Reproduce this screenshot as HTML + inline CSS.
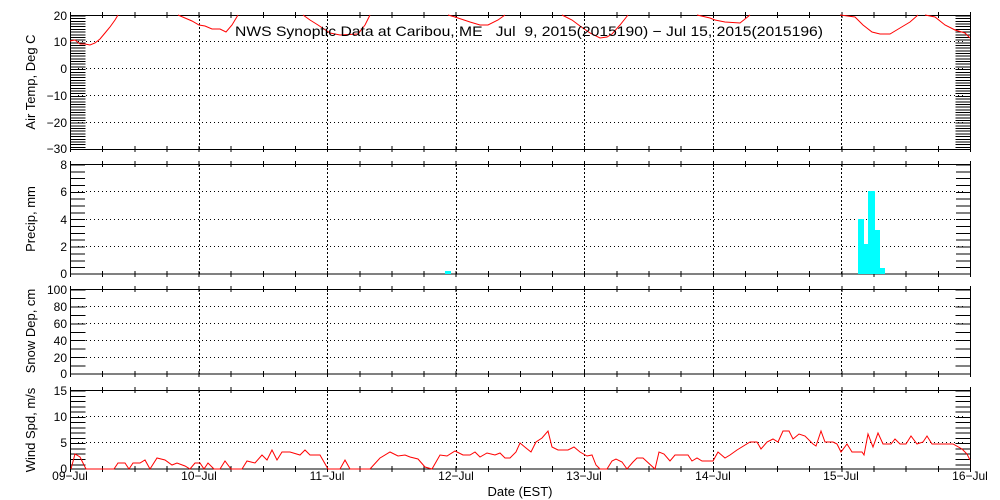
<!DOCTYPE html>
<html><head><meta charset="utf-8"><style>
html,body{margin:0;padding:0;background:#fff;}
svg{display:block;font-family:"Liberation Sans",sans-serif;}
</style></head><body>
<svg width="1000" height="500" viewBox="0 0 1000 500" xmlns="http://www.w3.org/2000/svg">
<rect width="1000" height="500" fill="#fff"/>
<g fill="none" stroke="#000" shape-rendering="crispEdges">
<rect x="70.5" y="15.5" width="900" height="134"/>
<rect x="70.5" y="164.5" width="900" height="109.5"/>
<rect x="70.5" y="289.5" width="900" height="84.5"/>
<rect x="70.5" y="390.5" width="900" height="78.5"/>
<line x1="78" y1="15.5" x2="78" y2="149.5" stroke-width="15" stroke-dasharray="1 1.68"/>
<line x1="963" y1="15.5" x2="963" y2="149.5" stroke-width="15" stroke-dasharray="1 1.68"/>
<line x1="78" y1="164.5" x2="78" y2="274" stroke-width="14" stroke-dasharray="1 5.84"/>
<line x1="963" y1="164.5" x2="963" y2="274" stroke-width="14" stroke-dasharray="1 5.84"/>
<line x1="78" y1="289.5" x2="78" y2="374" stroke-width="15" stroke-dasharray="1 7.45"/>
<line x1="963" y1="289.5" x2="963" y2="374" stroke-width="15" stroke-dasharray="1 7.45"/>
<line x1="78" y1="390.5" x2="78" y2="469" stroke-width="15" stroke-dasharray="1 4.27"/>
<line x1="963" y1="390.5" x2="963" y2="469" stroke-width="15" stroke-dasharray="1 4.27"/>
<g stroke-width="6" stroke-dasharray="1 31.14">
<line x1="70" y1="15" x2="971" y2="15"/><line x1="70" y1="149" x2="971" y2="149"/>
<line x1="70" y1="164" x2="971" y2="164"/><line x1="70" y1="274" x2="971" y2="274"/>
<line x1="70" y1="289" x2="971" y2="289"/><line x1="70" y1="374" x2="971" y2="374"/>
<line x1="70" y1="390" x2="971" y2="390"/><line x1="70" y1="469" x2="971" y2="469"/>
</g>
<g stroke-dasharray="1 3">
<line x1="78" y1="41.5" x2="963" y2="41.5"/><line x1="78" y1="68.5" x2="963" y2="68.5"/>
<line x1="78" y1="95.5" x2="963" y2="95.5"/><line x1="78" y1="122.5" x2="963" y2="122.5"/>
<line x1="78" y1="191.5" x2="963" y2="191.5"/><line x1="78" y1="219.5" x2="963" y2="219.5"/>
<line x1="78" y1="246.5" x2="963" y2="246.5"/>
<line x1="78" y1="306.5" x2="963" y2="306.5"/><line x1="78" y1="323.5" x2="963" y2="323.5"/>
<line x1="78" y1="340.5" x2="963" y2="340.5"/><line x1="78" y1="357.5" x2="963" y2="357.5"/>
<line x1="78" y1="416.5" x2="963" y2="416.5"/><line x1="78" y1="442.5" x2="963" y2="442.5"/>
</g>
<g stroke-dasharray="2 2">
<line x1="199.5" y1="15" x2="199.5" y2="149"/><line x1="327.5" y1="15" x2="327.5" y2="149"/><line x1="456.5" y1="15" x2="456.5" y2="149"/><line x1="584.5" y1="15" x2="584.5" y2="149"/><line x1="713.5" y1="15" x2="713.5" y2="149"/><line x1="841.5" y1="15" x2="841.5" y2="149"/>
<line x1="199.5" y1="164" x2="199.5" y2="274"/><line x1="327.5" y1="164" x2="327.5" y2="274"/><line x1="456.5" y1="164" x2="456.5" y2="274"/><line x1="584.5" y1="164" x2="584.5" y2="274"/><line x1="713.5" y1="164" x2="713.5" y2="274"/><line x1="841.5" y1="164" x2="841.5" y2="274"/>
<line x1="199.5" y1="289" x2="199.5" y2="374"/><line x1="327.5" y1="289" x2="327.5" y2="374"/><line x1="456.5" y1="289" x2="456.5" y2="374"/><line x1="584.5" y1="289" x2="584.5" y2="374"/><line x1="713.5" y1="289" x2="713.5" y2="374"/><line x1="841.5" y1="289" x2="841.5" y2="374"/>
<line x1="199.5" y1="390" x2="199.5" y2="469"/><line x1="327.5" y1="390" x2="327.5" y2="469"/><line x1="456.5" y1="390" x2="456.5" y2="469"/><line x1="584.5" y1="390" x2="584.5" y2="469"/><line x1="713.5" y1="390" x2="713.5" y2="469"/><line x1="841.5" y1="390" x2="841.5" y2="469"/>
</g>
</g>
<g fill="none" stroke="#f00" stroke-width="1">
<polyline points="70,41 75,40 80,44 85,44 90,45 95,43 100,39 105,33 110,27 115,20 118,15"/>
<polyline points="178,15 185,18 192,21 199,25 205,26 212,29 220,29 226,32 232,25 238,15"/>
<polyline points="303,15 310,20 318,25 330,33 340,35 358,34 365,25 370,15"/>
<polyline points="448,15 455,17 470,22 480,25 488,25 498,20 505,15"/>
<polyline points="562,15 572,20 580,26 590,33 600,38 607,37 612,34 620,25 628,15"/>
<polyline points="697,15 710,18 715,20 725,22 740,23 750,15"/>
<polyline points="840,15 855,17 863,25 872,32 880,34 890,34 900,28 910,22 918,15"/>
<polyline points="925,15 935,17 945,25 955,30 965,33 970,38"/>
<polyline points="71,469 75,454 80,457 84,465 86,469 114,469 118,463 125,463 129,469 133,463 140,463 145,460 150,469 157,458 165,460 172,465 177,463 185,466 190,469 195,463 200,463 204,469 208,463 214,469 220,469 225,461 231,469 242,469 247,461 255,463 262,455 267,460 272,450 277,460 282,452 290,452 300,455 305,450 310,455 320,455 328,469 340,469 345,460 350,469 370,469 380,458 390,452 398,456 405,455 410,457 418,459 425,467 432,469 440,455 447,456 455,451 463,455 470,455 475,452 480,457 487,453 495,455 500,453 505,458 510,458 516,452 520,443 526,448 531,452 536,442 542,438 548,431 552,447 558,450 568,450 574,447 580,452 587,456 592,455 596,465 600,469 607,469 612,461 616,459 622,462 627,469 633,462 637,458 643,458 655,469 659,452 664,454 670,461 675,455 688,455 692,461 697,458 702,461 713,461 718,452 725,458 730,455 737,450 750,442 757,442 761,449 767,442 773,439 778,442 783,431 789,431 793,439 799,434 805,436 813,444 816,446 821,431 825,442 833,442 837,444 841,452 847,444 852,452 862,452 864,455 868,434 873,447 878,433 883,444 891,444 895,439 900,444 906,444 911,436 917,444 923,442 927,436 932,444 953,444 962,449 967,454 970,460"/>
</g>
<g fill="#0ff">
<rect x="445" y="271" width="6" height="3"/>
<rect x="858" y="219" width="6" height="55"/>
<rect x="864" y="244" width="4" height="30"/>
<rect x="868" y="191" width="7" height="83"/>
<rect x="875" y="230" width="5" height="44"/>
<rect x="880" y="268" width="5" height="6"/>
</g>
<g font-size="12" text-anchor="end" fill="#000">
<text x="67" y="20">20</text><text x="67" y="46">10</text><text x="67" y="73">0</text><text x="67" y="100">−10</text><text x="67" y="127">−20</text><text x="67" y="153">−30</text>
<text x="67" y="169">8</text><text x="67" y="196">6</text><text x="67" y="224">4</text><text x="67" y="251">2</text><text x="67" y="278">0</text>
<text x="67" y="294">100</text><text x="67" y="311">80</text><text x="67" y="328">60</text><text x="67" y="345">40</text><text x="67" y="362">20</text><text x="67" y="378">0</text>
<text x="67" y="395">15</text><text x="67" y="421">10</text><text x="67" y="447">5</text><text x="67" y="473">0</text>
</g>
<g font-size="12" text-anchor="middle" fill="#000">
<text x="70" y="480">09−Jul</text><text x="199" y="480">10−Jul</text><text x="327" y="480">11−Jul</text><text x="456" y="480">12−Jul</text><text x="584" y="480">13−Jul</text><text x="713" y="480">14−Jul</text><text x="841" y="480">15−Jul</text><text x="970" y="480">16−Jul</text>
<text x="520" y="496" font-size="13">Date (EST)</text>
</g>
<g font-size="13" text-anchor="middle" fill="#000">
<text transform="translate(35,82) rotate(-90)">Air Temp, Deg C</text>
<text transform="translate(35,219) rotate(-90)">Precip, mm</text>
<text transform="translate(35,331) rotate(-90)">Snow Dep, cm</text>
<text transform="translate(35,430) rotate(-90)">Wind Spd, m/s</text>
</g>
<text x="235" y="36" font-size="14" fill="#000" textLength="588" lengthAdjust="spacingAndGlyphs" xml:space="preserve">NWS Synoptic Data at Caribou, ME   Jul  9, 2015(2015190) − Jul 15, 2015(2015196)</text>
</svg>
</body></html>
